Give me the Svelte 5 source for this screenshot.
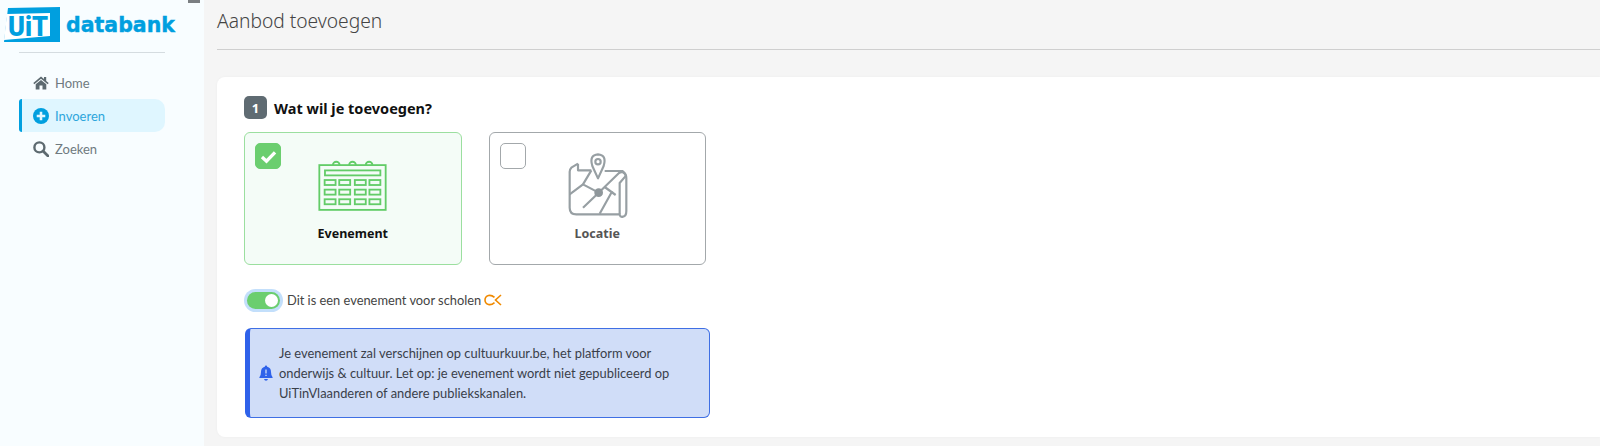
<script>
  const navItems = [
    { label: 'Home', icon: 'home' },
    { label: 'Invoeren', icon: 'plus', active: true },
    { label: 'Zoeken', icon: 'search' }
  ];

  // calendar grid, in the icon's own coordinates
  const calCols = [270, 314, 361, 405];
  const calRows = [282, 311, 340];
  const calRings = [305, 354, 404];
</script>

<div class="page">
  <aside class="sidebar">
    <div class="handle"></div>
    <div class="logo">
      <svg class="logo-mark" viewBox="0 0 57 36" width="57" height="36">
        <polygon points="4,1 56,0 56,35 0,35" fill="#009fdf" />
        <polygon points="3,7 46,6 46,29 0,33" fill="#ffffff" />
        <text x="4" y="28.5" class="logo-uit" textLength="40" lengthAdjust="spacingAndGlyphs">UiT</text>
      </svg>
      <span class="logo-word">databank</span>
    </div>
    <div class="divider"></div>
    <nav>
      {#each navItems as item}
        <div class="nav-item" class:active={item.active}>
          {#if item.icon === 'home'}
            <svg viewBox="0 0 16 14" width="16" height="14"><path d="M8 0.6 L0.3 7 L1.3 8.2 L8 2.7 L14.7 8.2 L15.7 7 L13.2 4.9 V1 H11 V3.1 Z M8 4 L2.7 8.3 V13.6 H6.5 V9.6 H9.5 V13.6 H13.3 V8.3 Z" fill="currentColor" /></svg>
          {:else if item.icon === 'plus'}
            <svg viewBox="0 0 15 15" width="16" height="16"><circle cx="7.5" cy="7.5" r="7.5" fill="currentColor" /><path d="M7.5 3.5 V11.5 M3.5 7.5 H11.5" stroke="#dff6ff" stroke-width="2.4" /></svg>
          {:else}
            <svg viewBox="0 0 16 16" width="16" height="16"><circle cx="6.4" cy="6.4" r="5" fill="none" stroke="currentColor" stroke-width="2.4" /><path d="M10 10 L15 15" stroke="currentColor" stroke-width="2.8" stroke-linecap="round" /></svg>
          {/if}
          <span>{item.label}</span>
        </div>
      {/each}
    </nav>
  </aside>

  <main class="main">
    <h1>Aanbod toevoegen</h1>

    <section class="card">
      <div class="step">
        <span class="step-no">1</span>
        <h2>Wat wil je toevoegen?</h2>
      </div>

      <div class="types">
        <div class="type selected">
          <span class="check">
            <svg viewBox="0 0 16 16" width="19" height="19"><path d="M2.5 8.5 L6.3 12 L13.5 4.5" fill="none" stroke="#fff" stroke-width="2.8" /></svg>
          </span>
          <svg class="type-icon" viewBox="250 222 208 153" width="69" height="51">
            <g fill="none" stroke="#63cc68" stroke-width="5.5">
              {#each calRings as x}
                <path d="M{x - 10} 237 a10 10 0 0 1 20 0" />
              {/each}
              <rect x="254" y="237" width="200" height="135" />
              <rect x="271" y="253" width="167" height="15" />
              {#each calRows as y}
                {#each calCols as x}
                  <rect {x} {y} width="33" height="15" />
                {/each}
              {/each}
            </g>
          </svg>
          <span class="type-label">Evenement</span>
        </div>

        <div class="type">
          <span class="check"></span>
          <svg class="type-icon map" viewBox="0 0 216 210" width="72" height="70">
            <g fill="none" stroke="#979fa3" stroke-width="6.5" stroke-linejoin="round">
              <path d="M45 38 L25 50 Q20 55 20 62 V170 Q20 190 40 190 H170 V192 Q172 199 180 197 Q190 195 190 180 V82 Q190 68 178 60 H125" />
              <path d="M45 38 V58 H85" />
              <path d="M170 190 V96 L189 74 Q180 58 168 66 L107 125 L60 100 L85 58" />
              <path d="M60 100 L20 130 M107 125 L60 170 M148 120 L110 188 M125 108 L158 132" />
              <path d="M105 82 L88 45 Q78 12 105 10 Q132 12 122 45 Z" fill="#fff" />
              <circle cx="105" cy="32" r="8" />
            </g>
            <circle cx="107" cy="125" r="13" fill="#8f979b" />
          </svg>
          <span class="type-label">Locatie</span>
        </div>
      </div>

      <div class="school">
        <span class="toggle"><span class="knob"></span></span>
        <span>Dit is een evenement voor scholen</span>
        <svg viewBox="0 0 18 12" width="18" height="12"><path d="M10.5 3.4 Q7.5 0.8 4.5 1.5 Q1 2.5 1 6 Q1 9.5 4.5 10.5 Q7.5 11.2 10.5 8.6 M17 1 L11.5 6 L17 11" fill="none" stroke="#f08a00" stroke-width="1.6" /></svg>
      </div>

      <div class="alert">
        <svg viewBox="0 0 14 16" width="14" height="16"><path d="M7 0.5 Q8.2 0.5 8.2 1.8 Q12 2.6 12 7 Q12 10.5 13.6 12.2 V13 H0.4 V12.2 Q2 10.5 2 7 Q2 2.6 5.8 1.8 Q5.8 0.5 7 0.5 Z M5 14 H9 Q8.6 15.8 7 15.8 Q5.4 15.8 5 14 Z" fill="#2f62ea" /><path d="M7 4.5 V8.5 M7 9.8 V11" stroke="#d0ddf8" stroke-width="1.3" /></svg>
        <p>Je evenement zal verschijnen op cultuurkuur.be, het platform voor onderwijs &amp; cultuur. Let op: je evenement wordt niet gepubliceerd op UiTinVlaanderen of andere publiekskanalen.</p>
      </div>
    </section>
  </main>
</div>

<style>
  :global(body) {
    margin: 0;
    background: #f5f5f5;
  }

  .page {
    display: flex;
    height: 446px;
    overflow: hidden;
    font-family: "Noto Sans", "Open Sans", sans-serif;
    color: #222;
  }

  .sidebar {
    position: relative;
    flex: 0 0 204px;
    min-width: 0;
    box-sizing: border-box;
    background: #f8fdff;
    padding: 7px 39px 0 4px;
  }

  .handle {
    position: absolute;
    top: 0;
    left: 188px;
    width: 12px;
    height: 3px;
    background: #7b7f82;
  }

  .logo {
    display: flex;
    align-items: center;
    gap: 5px;
    height: 36px;
    white-space: nowrap;
  }

  .logo-mark {
    flex: none;
  }

  .logo-uit {
    font-family: Roboto, sans-serif;
    font-weight: 900;
    font-size: 28px;
    fill: #009fdf;
  }

  .logo-word {
    font-family: "DejaVu Sans", sans-serif;
    font-weight: 700;
    font-size: 20.5px;
    color: #009fdf;
    -webkit-text-stroke: 0.4px #009fdf;
  }

  .divider {
    height: 1px;
    margin: 9px 0 0 15px;
    background: #d5dce0;
  }

  nav {
    margin: 13px 0 0 15px;
    display: flex;
    flex-direction: column;
  }

  .nav-item {
    display: flex;
    align-items: center;
    height: 33px;
    box-sizing: border-box;
    padding-left: 11px;
    gap: 6px;
    border-left: 3px solid transparent;
    border-radius: 3px 10px 10px 3px;
    font-family: Lato, sans-serif;
    font-size: 13px;
    color: #6f7a80;
  }

  .nav-item svg {
    flex: none;
    color: #5d6a70;
  }

  .nav-item.active {
    background: #dff6ff;
    border-left-color: #009fdf;
    color: #2ea6dc;
  }

  .nav-item.active svg {
    color: #009fdf;
  }

  .main {
    flex: 1;
    min-width: 0;
    padding-left: 13px;
  }

  h1 {
    margin: 0;
    height: 50px;
    box-sizing: border-box;
    padding-top: 8px;
    border-bottom: 1px solid #cfcfcf;
    font-size: 19.2px;
    line-height: 26px;
    font-weight: 300;
    color: #444;
  }

  .card {
    box-sizing: border-box;
    height: 360px;
    margin-top: 27px;
    padding: 19px 0 0 27px;
    background: #fff;
    border-radius: 8px 0 0 8px;
    box-shadow: 0 0 3px rgba(0, 0, 0, 0.04);
  }

  .step {
    display: flex;
    align-items: center;
    gap: 7px;
    height: 23px;
  }

  .step-no {
    display: flex;
    align-items: center;
    justify-content: center;
    width: 23px;
    height: 23px;
    border-radius: 5px;
    background: #5f6b72;
    color: #fff;
    font-size: 13px;
    font-weight: 700;
  }

  h2 {
    margin: 0;
    font-size: 14.5px;
    font-weight: 700;
    color: #111;
  }

  .types {
    display: flex;
    gap: 27px;
    margin-top: 13px;
  }

  .type {
    position: relative;
    display: flex;
    flex-direction: column;
    align-items: center;
    box-sizing: border-box;
    width: 217.5px;
    height: 133px;
    border: 1px solid #a3a8ab;
    border-radius: 6px;
    background: #fff;
  }

  .type.selected {
    border-color: #9bdf9f;
    background: #f4fcf7;
  }

  .type-icon {
    margin-top: 27px;
  }

  .type-icon.map {
    margin: 18px 0 0 4px;
  }

  .check {
    position: absolute;
    top: 10px;
    left: 10px;
    display: flex;
    align-items: center;
    justify-content: center;
    box-sizing: border-box;
    width: 26px;
    height: 26px;
    border: 1px solid #a3a8ab;
    border-radius: 5px;
    background: #fff;
  }

  .selected .check {
    border-color: #6bce6f;
    background: #6bce6f;
  }

  .type-label {
    position: absolute;
    top: 92px;
    font-size: 12.5px;
    font-weight: 700;
    color: #111;
  }

  .type:not(.selected) .type-label {
    color: #555;
  }

  .school {
    display: flex;
    align-items: center;
    gap: 3px;
    margin: 26px 0 0 3px;
    height: 18px;
    font-family: Lato, sans-serif;
    font-size: 12.85px;
    color: #444;
  }

  .toggle {
    display: flex;
    align-items: center;
    justify-content: flex-end;
    box-sizing: border-box;
    width: 33px;
    height: 17px;
    margin-right: 4px;
    padding-right: 2px;
    border-radius: 9px;
    background: #6bce6f;
    box-shadow: 0 0 0 3px #c3dffb;
  }

  .knob {
    width: 13px;
    height: 13px;
    border-radius: 50%;
    background: #fff;
  }

  .alert {
    display: flex;
    align-items: center;
    gap: 6px;
    box-sizing: border-box;
    width: 465px;
    height: 90px;
    margin: 19px 0 0 1px;
    padding: 0 24px 0 9px;
    background: #d0ddf8;
    border: 1px solid #3f6fe4;
    border-left: 5px solid #2f62ea;
    border-radius: 6px;
  }

  .alert svg {
    flex: none;
  }

  .alert p {
    margin: 0;
    font-family: Lato, sans-serif;
    font-size: 12.9px;
    line-height: 20px;
    color: #3a3f4a;
  }
</style>
